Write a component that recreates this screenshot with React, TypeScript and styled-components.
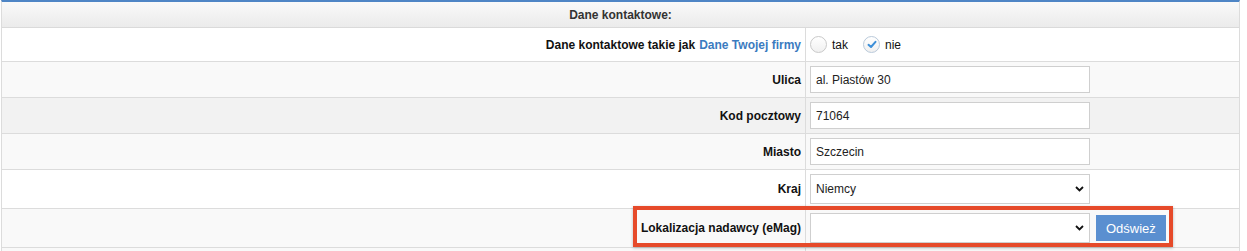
import React from "react";
import styled, { createGlobalStyle } from "styled-components";

const Global = createGlobalStyle`
  html, body { margin: 0; padding: 0; background: #fff; }
  body { font-family: "Liberation Sans", Arial, Helvetica, sans-serif; color: #222; }
`;

const Table = styled.div`
  position: relative;
  width: 1239px;
  margin-left: 1px;
  border-top: 2px solid #4e85c5;
  border-left: 1px solid #dcdcdc;
  border-right: 1px solid #dcdcdc;
  box-sizing: border-box;
`;

const Header = styled.div`
  height: 25px;
  border-bottom: 1px solid #dadada;
  background: linear-gradient(#f9f9f9, #ebebeb);
  display: flex;
  align-items: center;
  justify-content: center;
  font-size: 12px;
  font-weight: bold;
  color: #333;
`;

const Row = styled.div<{ $bg: string; $h: number }>`
  display: grid;
  grid-template-columns: 804px 1fr;
  height: ${(p) => p.$h}px;
  background: ${(p) => p.$bg};
  border-bottom: 1px solid #dcdcdc;
`;

const Label = styled.div`
  display: flex;
  align-items: center;
  justify-content: flex-end;
  padding-right: 4px;
  border-right: 1px solid #dcdcdc;
  font-size: 12px;
  font-weight: bold;
  color: #111;
  white-space: nowrap;
`;

const Link = styled.a`
  color: #3b7bbf;
  text-decoration: none;
  margin-left: 4px;
`;

const Value = styled.div`
  display: flex;
  align-items: center;
  padding-left: 4px;
  gap: 6px;
`;

const Input = styled.input`
  box-sizing: border-box;
  width: 280px;
  height: 27px;
  border: 1px solid #cfcfcf;
  background: #fff;
  padding: 0 5px;
  font-family: inherit;
  font-size: 12px;
  color: #222;
  outline: none;
`;

const SelectWrap = styled.div`
  position: relative;
  width: 280px;
  height: 30px;
`;

const Select = styled.select`
  box-sizing: border-box;
  width: 100%;
  height: 100%;
  border: 1px solid #cfcfcf;
  background: #fff;
  padding: 0 5px;
  font-family: inherit;
  font-size: 12px;
  color: #222;
  appearance: none;
  -webkit-appearance: none;
  border-radius: 0;
  outline: none;
`;

const Chevron = styled.svg`
  position: absolute;
  right: 6px;
  top: 50%;
  margin-top: -3px;
  pointer-events: none;
`;

const Button = styled.button`
  height: 26px;
  padding: 0 10px;
  border: none;
  background: #5a8fd0;
  color: #fff;
  font-family: inherit;
  font-size: 13px;
  cursor: pointer;
`;

const RadioGroup = styled.label`
  display: flex;
  align-items: center;
  gap: 5px;
  font-size: 12px;
  color: #111;
  margin-right: 9px;
`;

const RadioCircle = styled.span<{ $on?: boolean }>`
  box-sizing: border-box;
  width: 17px;
  height: 17px;
  border-radius: 50%;
  border: 1px solid ${(p) => (p.$on ? "#b9c9da" : "#c9c9c9")};
  background: linear-gradient(#ffffff, #f0f0f0);
  display: flex;
  align-items: center;
  justify-content: center;
`;

const Highlight = styled.div`
  position: absolute;
  left: 631px;
  top: 204px;
  width: 540px;
  height: 41px;
  box-sizing: border-box;
  border: 4px solid #e64a2a;
  box-shadow: 0 1px 3px rgba(0, 0, 0, 0.25);
  pointer-events: none;
`;

const Radio: React.FC<{ checked?: boolean; label: string }> = ({ checked, label }) => (
  <RadioGroup>
    <RadioCircle $on={checked}>
      {checked && (
        <svg width="10" height="9" viewBox="0 0 10 9">
          <path d="M1.5 4.8 L4 7 L8.5 1.8" fill="none" stroke="#3d8fd8" strokeWidth="2" strokeLinecap="round" strokeLinejoin="round" />
        </svg>
      )}
    </RadioCircle>
    {label}
  </RadioGroup>
);

const ChevronIcon = () => (
  <Chevron width="9" height="6" viewBox="0 0 9 6">
    <path d="M1 1 L4.5 4.5 L8 1" fill="none" stroke="#111" strokeWidth="1.8" />
  </Chevron>
);

export default function App() {
  return (
    <>
      <Global />
      <Table>
        <Header>Dane kontaktowe:</Header>
        <Row $bg="#ffffff" $h={33}>
          <Label>
            Dane kontaktowe takie jak<Link href="#">Dane Twojej firmy</Link>
          </Label>
          <Value>
            <Radio label="tak" />
            <Radio checked label="nie" />
          </Value>
        </Row>
        <Row $bg="#f9f9f9" $h={35}>
          <Label>Ulica</Label>
          <Value>
            <Input defaultValue="al. Piastów 30" />
          </Value>
        </Row>
        <Row $bg="#f2f2f2" $h={35}>
          <Label>Kod pocztowy</Label>
          <Value>
            <Input defaultValue="71064" />
          </Value>
        </Row>
        <Row $bg="#f9f9f9" $h={35}>
          <Label>Miasto</Label>
          <Value>
            <Input defaultValue="Szczecin" />
          </Value>
        </Row>
        <Row $bg="#ffffff" $h={38}>
          <Label>Kraj</Label>
          <Value>
            <SelectWrap>
              <Select defaultValue="DE">
                <option value="DE">Niemcy</option>
                <option value="PL">Polska</option>
              </Select>
              <ChevronIcon />
            </SelectWrap>
          </Value>
        </Row>
        <Row $bg="#f9f9f9" $h={38}>
          <Label>Lokalizacja nadawcy (eMag)</Label>
          <Value>
            <SelectWrap>
              <Select defaultValue="">
                <option value=""></option>
              </Select>
              <ChevronIcon />
            </SelectWrap>
            <Button>Odśwież</Button>
          </Value>
        </Row>
        <Row $bg="#f9f9f9" $h={10}>
          <Label />
          <Value />
        </Row>
        <Highlight />
      </Table>
    </>
  );
}
